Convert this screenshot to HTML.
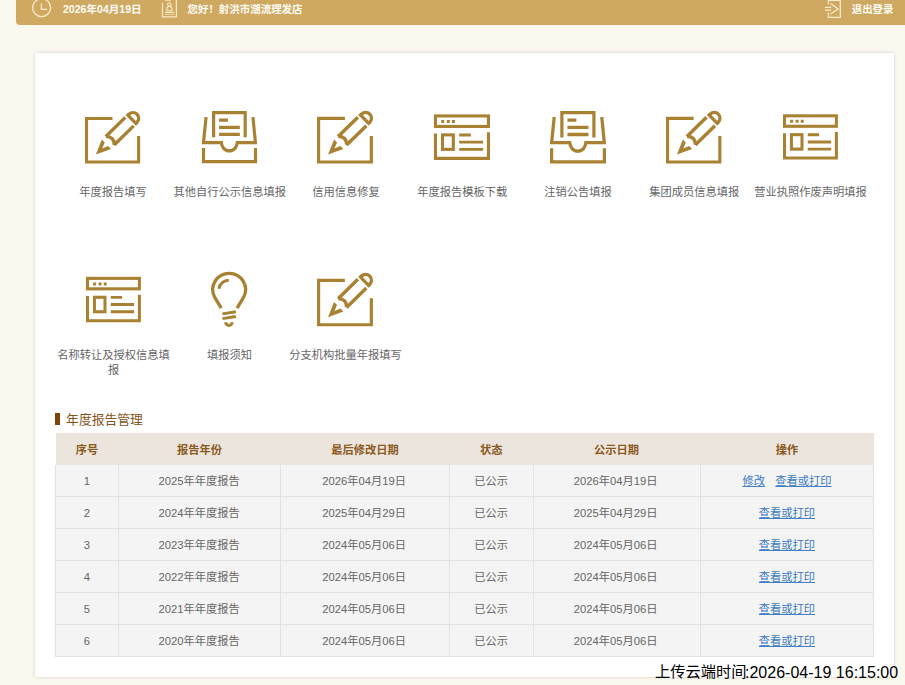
<!DOCTYPE html>
<html lang="zh-CN"><head><meta charset="utf-8"><title>年度报告管理</title>
<style>
*{margin:0;padding:0;box-sizing:border-box}
html,body{width:905px;height:685px;overflow:hidden;background:#fbf8f0;font-family:"Liberation Sans","Noto Sans CJK SC",sans-serif}
.page{position:relative;width:905px;height:685px;overflow:hidden}
svg{display:block;overflow:visible}
svg.p{position:absolute}
svg text{font-family:"Liberation Sans","Noto Sans CJK SC",sans-serif}
.bar{position:absolute;left:16px;top:0;width:889px;height:24.5px;background:#cfa962;border-bottom-left-radius:4px}
.card{position:absolute;left:35px;top:53px;width:859px;height:623.6px;background:#fff;box-shadow:0 0 3.5px rgba(0,0,0,.17)}
.grid{list-style:none}
.ttl{font-weight:normal}
.ttl i{position:absolute;left:20px;top:360px;width:5px;height:12px;background:#7c4405}
.tb{position:absolute;left:20px;top:380px;border-collapse:separate;border-spacing:0;table-layout:fixed;width:819px}
.tb th{height:31.5px;background:#ece5dd}
.tb th:first-child{border-left:1px solid #fff}
.tb td{height:32px;background:#f4f4f4;border-bottom:1px solid #e1e1e1;border-left:1px solid #e1e1e1}
.tb td:last-child{border-right:1px solid #e1e1e1}
.lk{cursor:pointer}
.wm{position:absolute;left:0;top:0}
</style></head>
<body><div class="page">
<header class="bar"><span class="hi"><svg class="p" aria-hidden="true" style="left:14px;top:-3px" width="24" height="24" viewBox="0 0 24 24"><g><g fill="none" stroke="#fbecc8" stroke-width="1.3"><circle cx="11.6" cy="10.7" r="9"/><path d="M11.4 6.8V12.3H17"/></g></g></svg><svg class="p" style="left:47px;top:2px" width="82" height="15" viewBox="0 0 82 15"><g transform="translate(0 0.35)"><g transform="translate(0 10.55)"><text x="0" y="0" font-size="10.55" font-weight="700" fill="#fffdf5">2026年04月19日</text></g></g></svg></span><span class="hi"><svg class="p" aria-hidden="true" style="left:144px;top:0px" width="20" height="20" viewBox="0 0 20 20"><g><g fill="none" stroke="#fbecc8" stroke-width="1.25"><path d="M2.5 3V16.75H16.4V0"/><path d="M5 0.3H11" stroke-width="0.9"/><path d="M4.9 12.4H14.1"/><path d="M4.9 14.4H14.1" stroke-width="0.9" opacity=".75"/><circle cx="9.3" cy="4.5" r="1.7" stroke-width="1.1"/><path d="M6.9 10.7V8.2Q6.9 6.5 9.3 6.5Q11.9 6.5 11.9 8.2V10.7Z" stroke-width="1.1"/></g></g></svg><svg class="p" style="left:171px;top:2px" width="116" height="15" viewBox="0 0 116 15"><g transform="translate(0.5 0.84)"><g transform="translate(0 10.46)"><text x="0" y="0" font-size="10.46" font-weight="700" fill="#fffdf5">您好！射洪市潮流理发店</text></g></g></svg></span><a class="hi"><svg class="p" aria-hidden="true" style="left:806px;top:0px" width="22" height="20" viewBox="0 0 22 20"><g><g fill="none" stroke="#fbecc8" stroke-width="1.25"><path d="M6.4 4.2V0.3H18.3V17.3H6.4V12.6"/><path d="M3 7.4H9.2M3 10.1H9.2" stroke-width="1.1"/><path d="M8.6 3.6L16.1 8.9L8.6 14.1"/></g></g></svg><svg class="p" style="left:835px;top:2px" width="43" height="16" viewBox="0 0 43 16"><g transform="translate(0.7 0.94)"><g transform="translate(0 10.46)"><text x="0" y="0" font-size="10.46" font-weight="700" fill="#fffdf5">退出登录</text></g></g></svg></a></header>
<main class="card">
<ul class="grid"><li><svg class="p" aria-hidden="true" style="left:46px;top:51px" width="72" height="68" viewBox="0 0 72 68"><g transform="translate(4 4.256) scale(0.99549 0.9936)"><g fill="none" stroke="#a88132" stroke-width="3.1"><path d="M27.6 10.3H1.55V54.05H53.85V28"/><g transform="translate(11.2 46.3) rotate(-44.4)" stroke-width="3.4"><path d="M19.4 -6H46.9M19.4 6H46.9M19.6 -6Q25.4 0 19.6 6"/><path d="M50.3 -7.4V7.4" stroke-width="3.2"/><path d="M50.3 -5.7H51.8A5.7 5.7 0 0 1 51.8 5.7H50.3"/><path d="M-0.4 0L14.4 -6.6V-2.4L8.4 0L14.4 2.4V6.6Z" fill="#a88132" stroke="none"/></g></g></g></svg><svg class="p" style="left:44px;top:132px" width="68" height="16" viewBox="0 0 68 16"><g transform="translate(0.15 0.15)"><g transform="translate(0 11.25)"><text x="0" y="0" font-size="11.25" fill="#666666">年度报告填写</text></g></g></svg></li><li><svg class="p" aria-hidden="true" style="left:162px;top:46px" width="72" height="68" viewBox="0 0 72 68"><g transform="translate(-195.349 -98.476) scale(0.99281 0.99618)"><g fill="none" stroke="#a88132" stroke-width="3.2"><path d="M213.5 137.3V112.6H245.3V137.3"/><path d="M219 120H227.9M219 127.3H239.9M219 134.4H239.9" stroke-width="3.3"/><path d="M205.9 117L203.3 142.6H221.3C221.6 147 224.5 151 229.3 151C234.1 151 237 147 237.3 142.6H255.6L253.1 117"/><path d="M203.3 148.1V161.7H255.7V148.1"/></g></g></svg><svg class="p" style="left:138px;top:132px" width="114" height="16" viewBox="0 0 114 16"><g transform="translate(0.55 0.15)"><g transform="translate(0 11.25)"><text x="0" y="0" font-size="11.25" fill="#666666">其他自行公示信息填报</text></g></g></svg></li><li><svg class="p" aria-hidden="true" style="left:278px;top:51px" width="72" height="68" viewBox="0 0 72 68"><g transform="translate(4.05 4.137) scale(1.0081 0.99573)"><g fill="none" stroke="#a88132" stroke-width="3.1"><path d="M27.6 10.3H1.55V54.05H53.85V28"/><g transform="translate(11.2 46.3) rotate(-44.4)" stroke-width="3.4"><path d="M19.4 -6H46.9M19.4 6H46.9M19.6 -6Q25.4 0 19.6 6"/><path d="M50.3 -7.4V7.4" stroke-width="3.2"/><path d="M50.3 -5.7H51.8A5.7 5.7 0 0 1 51.8 5.7H50.3"/><path d="M-0.4 0L14.4 -6.6V-2.4L8.4 0L14.4 2.4V6.6Z" fill="#a88132" stroke="none"/></g></g></g></svg><svg class="p" style="left:277px;top:132px" width="68" height="16" viewBox="0 0 68 16"><g transform="translate(0.15 0.15)"><g transform="translate(0 11.25)"><text x="0" y="0" font-size="11.25" fill="#666666">信用信息修复</text></g></g></svg></li><li><svg class="p" aria-hidden="true" style="left:394px;top:49px" width="72" height="68" viewBox="0 0 72 68"><g transform="translate(-429 -101.874) scale(1 0.9989)"><g fill="none" stroke="#a88132" stroke-width="3.1"><rect x="435.45" y="115.95" width="53" height="10.5"/><path d="M435.45 133.5V158.4H488.45V132.3"/><rect x="442.5" y="134.9" width="10.8" height="14.5"/><path d="M459.2 135H470.8M459.2 142.2H483.1M459.2 149.4H483.1" stroke-width="2.9"/><path d="M441.2 121.5h3M446.8 121.5h3M452 121.5h3" stroke-width="3"/></g></g></svg><svg class="p" style="left:382px;top:132px" width="91" height="16" viewBox="0 0 91 16"><g transform="translate(0.2 0.15)"><g transform="translate(0 11.25)"><text x="0" y="0" font-size="11.25" fill="#666666">年度报告模板下载</text></g></g></svg></li><li><svg class="p" aria-hidden="true" style="left:511px;top:46px" width="72" height="68" viewBox="0 0 72 68"><g transform="translate(-199.151 -99.424) scale(1.0072 1.0038)"><g fill="none" stroke="#a88132" stroke-width="3.2"><path d="M213.5 137.3V112.6H245.3V137.3"/><path d="M219 120H227.9M219 127.3H239.9M219 134.4H239.9" stroke-width="3.3"/><path d="M205.9 117L203.3 142.6H221.3C221.6 147 224.5 151 229.3 151C234.1 151 237 147 237.3 142.6H255.6L253.1 117"/><path d="M203.3 148.1V161.7H255.7V148.1"/></g></g></svg><svg class="p" style="left:509px;top:132px" width="68" height="16" viewBox="0 0 68 16"><g transform="translate(0.15 0.15)"><g transform="translate(0 11.25)"><text x="0" y="0" font-size="11.25" fill="#666666">注销公告填报</text></g></g></svg></li><li><svg class="p" aria-hidden="true" style="left:627px;top:51px" width="72" height="68" viewBox="0 0 72 68"><g transform="translate(4 4.137) scale(1 0.99573)"><g fill="none" stroke="#a88132" stroke-width="3.1"><path d="M27.6 10.3H1.55V54.05H53.85V28"/><g transform="translate(11.2 46.3) rotate(-44.4)" stroke-width="3.4"><path d="M19.4 -6H46.9M19.4 6H46.9M19.6 -6Q25.4 0 19.6 6"/><path d="M50.3 -7.4V7.4" stroke-width="3.2"/><path d="M50.3 -5.7H51.8A5.7 5.7 0 0 1 51.8 5.7H50.3"/><path d="M-0.4 0L14.4 -6.6V-2.4L8.4 0L14.4 2.4V6.6Z" fill="#a88132" stroke="none"/></g></g></g></svg><svg class="p" style="left:614px;top:132px" width="91" height="16" viewBox="0 0 91 16"><g transform="translate(0.2 0.15)"><g transform="translate(0 11.25)"><text x="0" y="0" font-size="11.25" fill="#666666">集团成员信息填报</text></g></g></svg></li><li><svg class="p" aria-hidden="true" style="left:744px;top:49px" width="72" height="68" viewBox="0 0 72 68"><g transform="translate(-420.619 -101.472) scale(0.97861 0.99451)"><g fill="none" stroke="#a88132" stroke-width="3.1"><rect x="435.45" y="115.95" width="53" height="10.5"/><path d="M435.45 133.5V158.4H488.45V132.3"/><rect x="442.5" y="134.9" width="10.8" height="14.5"/><path d="M459.2 135H470.8M459.2 142.2H483.1M459.2 149.4H483.1" stroke-width="2.9"/><path d="M441.2 121.5h3M446.8 121.5h3M452 121.5h3" stroke-width="3"/></g></g></svg><svg class="p" style="left:719px;top:132px" width="113" height="16" viewBox="0 0 113 16"><g transform="translate(0.25 0.15)"><g transform="translate(0 11.25)"><text x="0" y="0" font-size="11.25" fill="#666666">营业执照作废声明填报</text></g></g></svg></li><li><svg class="p" aria-hidden="true" style="left:47px;top:211px" width="72" height="68" viewBox="0 0 72 68"><g transform="translate(-420.619 -101.474) scale(0.97861 0.9989)"><g fill="none" stroke="#a88132" stroke-width="3.1"><rect x="435.45" y="115.95" width="53" height="10.5"/><path d="M435.45 133.5V158.4H488.45V132.3"/><rect x="442.5" y="134.9" width="10.8" height="14.5"/><path d="M459.2 135H470.8M459.2 142.2H483.1M459.2 149.4H483.1" stroke-width="2.9"/><path d="M441.2 121.5h3M446.8 121.5h3M452 121.5h3" stroke-width="3"/></g></g></svg><svg class="p" style="left:22px;top:295px" width="113" height="16" viewBox="0 0 113 16"><g transform="translate(0.25 0.15)"><g transform="translate(0 11.25)"><text x="0" y="0" font-size="11.25" fill="#666666">名称转让及授权信息填</text></g></g></svg><svg class="p" style="left:73px;top:310px" width="12" height="16" viewBox="0 0 12 16"><g transform="translate(0.025 0.15)"><g transform="translate(0 11.25)"><text x="0" y="0" font-size="11.25" fill="#666666">报</text></g></g></svg></li><li><svg class="p" aria-hidden="true" style="left:172px;top:206px" width="72" height="68" viewBox="0 0 72 68"><g transform="translate(-206.95 -254.305) scale(1 0.98534)"><g fill="none" stroke="#a88132" stroke-width="3.3"><path d="M221.2 307.9L215.6 298.6Q214.9 297.5 214.5 296.6A16.4 16.4 0 1 1 243.7 296.6Q243.3 297.5 242.6 298.6L237 307.9"/><path d="M218.9 288.2A10 10 0 0 1 228.7 279.7" stroke-width="3.1"/><path d="M222.4 313.8L235.8 311.6M222.4 318.6L235.8 316.4" stroke-width="3"/><path d="M224.1 322.4A4.8 4.6 0 0 0 233.7 322.4H230.6A1.7 1.7 0 0 1 227.2 322.4Z" fill="#a88132" stroke="none"/></g></g></svg><svg class="p" style="left:172px;top:295px" width="46" height="16" viewBox="0 0 46 16"><g transform="translate(0.1 0.15)"><g transform="translate(0 11.25)"><text x="0" y="0" font-size="11.25" fill="#666666">填报须知</text></g></g></svg></li><li><svg class="p" aria-hidden="true" style="left:278px;top:213px" width="72" height="68" viewBox="0 0 72 68"><g transform="translate(4.05 3.988) scale(1.0081 1.0128)"><g fill="none" stroke="#a88132" stroke-width="3.1"><path d="M27.6 10.3H1.55V54.05H53.85V28"/><g transform="translate(11.2 46.3) rotate(-44.4)" stroke-width="3.4"><path d="M19.4 -6H46.9M19.4 6H46.9M19.6 -6Q25.4 0 19.6 6"/><path d="M50.3 -7.4V7.4" stroke-width="3.2"/><path d="M50.3 -5.7H51.8A5.7 5.7 0 0 1 51.8 5.7H50.3"/><path d="M-0.4 0L14.4 -6.6V-2.4L8.4 0L14.4 2.4V6.6Z" fill="#a88132" stroke="none"/></g></g></g></svg><svg class="p" style="left:254px;top:295px" width="113" height="16" viewBox="0 0 113 16"><g transform="translate(0.25 0.15)"><g transform="translate(0 11.25)"><text x="0" y="0" font-size="11.25" fill="#666666">分支机构批量年报填写</text></g></g></svg></li></ul>
<h2 class="ttl"><i></i><svg class="p" style="left:31px;top:358px" width="77" height="18" viewBox="0 0 77 18"><g transform="translate(0.1 0)"><g transform="translate(0 12.8)"><text x="0" y="0" font-size="12.8" fill="#87531a">年度报告管理</text></g></g></svg></h2>
<table class="tb"><colgroup><col style="width:63px"><col style="width:162px"><col style="width:169px"><col style="width:84px"><col style="width:167px"><col style="width:174px"></colgroup><thead><tr><th><svg class="p" style="left:20px;top:9px" width="24" height="16" viewBox="0 0 24 16"><g transform="translate(0.65 0.35)"><g transform="translate(0 11.25)"><text x="0" y="0" font-size="11.25" font-weight="700" fill="#8b5a1e">序号</text></g></g></svg></th><th><svg class="p" style="left:122px;top:9px" width="46" height="16" viewBox="0 0 46 16"><g transform="translate(0.1 0.35)"><g transform="translate(0 11.25)"><text x="0" y="0" font-size="11.25" font-weight="700" fill="#8b5a1e">报告年份</text></g></g></svg></th><th><svg class="p" style="left:276px;top:9px" width="68" height="16" viewBox="0 0 68 16"><g transform="translate(0.35 0.35)"><g transform="translate(0 11.25)"><text x="0" y="0" font-size="11.25" font-weight="700" fill="#8b5a1e">最后修改日期</text></g></g></svg></th><th><svg class="p" style="left:424px;top:9px" width="24" height="16" viewBox="0 0 24 16"><g transform="translate(0.95 0.35)"><g transform="translate(0 11.25)"><text x="0" y="0" font-size="11.25" font-weight="700" fill="#8b5a1e">状态</text></g></g></svg></th><th><svg class="p" style="left:539px;top:9px" width="46" height="16" viewBox="0 0 46 16"><g transform="translate(0.1 0.35)"><g transform="translate(0 11.25)"><text x="0" y="0" font-size="11.25" font-weight="700" fill="#8b5a1e">公示日期</text></g></g></svg></th><th><svg class="p" style="left:720px;top:9px" width="24" height="16" viewBox="0 0 24 16"><g transform="translate(0.7 0.35)"><g transform="translate(0 11.25)"><text x="0" y="0" font-size="11.25" font-weight="700" fill="#8b5a1e">操作</text></g></g></svg></th></tr></thead><tbody><tr><td><svg class="p" style="left:28px;top:40px" width="8" height="17" viewBox="0 0 8 17"><g transform="translate(0.647 0.85)"><g transform="translate(0 11.25)"><text x="0" y="0" font-size="11.25" fill="#666666">1</text></g></g></svg></td><td><svg class="p" style="left:103px;top:40px" width="83" height="17" viewBox="0 0 83 17"><g transform="translate(0.463 0.85)"><g transform="translate(0 11.25)"><text x="0" y="0" font-size="11.25" fill="#666666">2025年年度报告</text></g></g></svg></td><td><svg class="p" style="left:267px;top:40px" width="86" height="17" viewBox="0 0 86 17"><g transform="translate(0.201 0.85)"><g transform="translate(0 11.25)"><text x="0" y="0" font-size="11.25" fill="#666666">2026年04月19日</text></g></g></svg></td><td><svg class="p" style="left:419px;top:40px" width="35" height="17" viewBox="0 0 35 17"><g transform="translate(0.325 0.85)"><g transform="translate(0 11.25)"><text x="0" y="0" font-size="11.25" fill="#666666">已公示</text></g></g></svg></td><td><svg class="p" style="left:518px;top:40px" width="87" height="17" viewBox="0 0 87 17"><g transform="translate(0.701 0.85)"><g transform="translate(0 11.25)"><text x="0" y="0" font-size="11.25" fill="#666666">2026年04月19日</text></g></g></svg></td><td><a class="lk"><svg class="p" style="left:687px;top:40px" width="23" height="17" viewBox="0 0 23 17"><g transform="translate(0.375 0.85)"><g transform="translate(0 11.25)"><text x="0" y="0" font-size="11.25" fill="#3a7abf">修改</text><rect x="0" y="0.85" width="22.5" height="1" fill="#3a7abf"/></g></g></svg></a><a class="lk"><svg class="p" style="left:720px;top:40px" width="57" height="17" viewBox="0 0 57 17"><g transform="translate(0.275 0.85)"><g transform="translate(0 11.25)"><text x="0" y="0" font-size="11.25" fill="#3a7abf">查看或打印</text><rect x="0" y="0.85" width="56.25" height="1" fill="#3a7abf"/></g></g></svg></a></td></tr><tr><td><svg class="p" style="left:28px;top:72px" width="8" height="17" viewBox="0 0 8 17"><g transform="translate(0.647 0.85)"><g transform="translate(0 11.25)"><text x="0" y="0" font-size="11.25" fill="#666666">2</text></g></g></svg></td><td><svg class="p" style="left:103px;top:72px" width="83" height="17" viewBox="0 0 83 17"><g transform="translate(0.463 0.85)"><g transform="translate(0 11.25)"><text x="0" y="0" font-size="11.25" fill="#666666">2024年年度报告</text></g></g></svg></td><td><svg class="p" style="left:267px;top:72px" width="86" height="17" viewBox="0 0 86 17"><g transform="translate(0.201 0.85)"><g transform="translate(0 11.25)"><text x="0" y="0" font-size="11.25" fill="#666666">2025年04月29日</text></g></g></svg></td><td><svg class="p" style="left:419px;top:72px" width="35" height="17" viewBox="0 0 35 17"><g transform="translate(0.325 0.85)"><g transform="translate(0 11.25)"><text x="0" y="0" font-size="11.25" fill="#666666">已公示</text></g></g></svg></td><td><svg class="p" style="left:518px;top:72px" width="87" height="17" viewBox="0 0 87 17"><g transform="translate(0.701 0.85)"><g transform="translate(0 11.25)"><text x="0" y="0" font-size="11.25" fill="#666666">2025年04月29日</text></g></g></svg></td><td><a class="lk"><svg class="p" style="left:703px;top:72px" width="58" height="17" viewBox="0 0 58 17"><g transform="translate(0.825 0.85)"><g transform="translate(0 11.25)"><text x="0" y="0" font-size="11.25" fill="#3a7abf">查看或打印</text><rect x="0" y="0.85" width="56.25" height="1" fill="#3a7abf"/></g></g></svg></a></td></tr><tr><td><svg class="p" style="left:28px;top:104px" width="8" height="17" viewBox="0 0 8 17"><g transform="translate(0.647 0.85)"><g transform="translate(0 11.25)"><text x="0" y="0" font-size="11.25" fill="#666666">3</text></g></g></svg></td><td><svg class="p" style="left:103px;top:104px" width="83" height="17" viewBox="0 0 83 17"><g transform="translate(0.463 0.85)"><g transform="translate(0 11.25)"><text x="0" y="0" font-size="11.25" fill="#666666">2023年年度报告</text></g></g></svg></td><td><svg class="p" style="left:267px;top:104px" width="86" height="17" viewBox="0 0 86 17"><g transform="translate(0.201 0.85)"><g transform="translate(0 11.25)"><text x="0" y="0" font-size="11.25" fill="#666666">2024年05月06日</text></g></g></svg></td><td><svg class="p" style="left:419px;top:104px" width="35" height="17" viewBox="0 0 35 17"><g transform="translate(0.325 0.85)"><g transform="translate(0 11.25)"><text x="0" y="0" font-size="11.25" fill="#666666">已公示</text></g></g></svg></td><td><svg class="p" style="left:518px;top:104px" width="87" height="17" viewBox="0 0 87 17"><g transform="translate(0.701 0.85)"><g transform="translate(0 11.25)"><text x="0" y="0" font-size="11.25" fill="#666666">2024年05月06日</text></g></g></svg></td><td><a class="lk"><svg class="p" style="left:703px;top:104px" width="58" height="17" viewBox="0 0 58 17"><g transform="translate(0.825 0.85)"><g transform="translate(0 11.25)"><text x="0" y="0" font-size="11.25" fill="#3a7abf">查看或打印</text><rect x="0" y="0.85" width="56.25" height="1" fill="#3a7abf"/></g></g></svg></a></td></tr><tr><td><svg class="p" style="left:28px;top:136px" width="8" height="17" viewBox="0 0 8 17"><g transform="translate(0.647 0.85)"><g transform="translate(0 11.25)"><text x="0" y="0" font-size="11.25" fill="#666666">4</text></g></g></svg></td><td><svg class="p" style="left:103px;top:136px" width="83" height="17" viewBox="0 0 83 17"><g transform="translate(0.463 0.85)"><g transform="translate(0 11.25)"><text x="0" y="0" font-size="11.25" fill="#666666">2022年年度报告</text></g></g></svg></td><td><svg class="p" style="left:267px;top:136px" width="86" height="17" viewBox="0 0 86 17"><g transform="translate(0.201 0.85)"><g transform="translate(0 11.25)"><text x="0" y="0" font-size="11.25" fill="#666666">2024年05月06日</text></g></g></svg></td><td><svg class="p" style="left:419px;top:136px" width="35" height="17" viewBox="0 0 35 17"><g transform="translate(0.325 0.85)"><g transform="translate(0 11.25)"><text x="0" y="0" font-size="11.25" fill="#666666">已公示</text></g></g></svg></td><td><svg class="p" style="left:518px;top:136px" width="87" height="17" viewBox="0 0 87 17"><g transform="translate(0.701 0.85)"><g transform="translate(0 11.25)"><text x="0" y="0" font-size="11.25" fill="#666666">2024年05月06日</text></g></g></svg></td><td><a class="lk"><svg class="p" style="left:703px;top:136px" width="58" height="17" viewBox="0 0 58 17"><g transform="translate(0.825 0.85)"><g transform="translate(0 11.25)"><text x="0" y="0" font-size="11.25" fill="#3a7abf">查看或打印</text><rect x="0" y="0.85" width="56.25" height="1" fill="#3a7abf"/></g></g></svg></a></td></tr><tr><td><svg class="p" style="left:28px;top:168px" width="8" height="17" viewBox="0 0 8 17"><g transform="translate(0.647 0.85)"><g transform="translate(0 11.25)"><text x="0" y="0" font-size="11.25" fill="#666666">5</text></g></g></svg></td><td><svg class="p" style="left:103px;top:168px" width="83" height="17" viewBox="0 0 83 17"><g transform="translate(0.463 0.85)"><g transform="translate(0 11.25)"><text x="0" y="0" font-size="11.25" fill="#666666">2021年年度报告</text></g></g></svg></td><td><svg class="p" style="left:267px;top:168px" width="86" height="17" viewBox="0 0 86 17"><g transform="translate(0.201 0.85)"><g transform="translate(0 11.25)"><text x="0" y="0" font-size="11.25" fill="#666666">2024年05月06日</text></g></g></svg></td><td><svg class="p" style="left:419px;top:168px" width="35" height="17" viewBox="0 0 35 17"><g transform="translate(0.325 0.85)"><g transform="translate(0 11.25)"><text x="0" y="0" font-size="11.25" fill="#666666">已公示</text></g></g></svg></td><td><svg class="p" style="left:518px;top:168px" width="87" height="17" viewBox="0 0 87 17"><g transform="translate(0.701 0.85)"><g transform="translate(0 11.25)"><text x="0" y="0" font-size="11.25" fill="#666666">2024年05月06日</text></g></g></svg></td><td><a class="lk"><svg class="p" style="left:703px;top:168px" width="58" height="17" viewBox="0 0 58 17"><g transform="translate(0.825 0.85)"><g transform="translate(0 11.25)"><text x="0" y="0" font-size="11.25" fill="#3a7abf">查看或打印</text><rect x="0" y="0.85" width="56.25" height="1" fill="#3a7abf"/></g></g></svg></a></td></tr><tr><td><svg class="p" style="left:28px;top:200px" width="8" height="17" viewBox="0 0 8 17"><g transform="translate(0.647 0.85)"><g transform="translate(0 11.25)"><text x="0" y="0" font-size="11.25" fill="#666666">6</text></g></g></svg></td><td><svg class="p" style="left:103px;top:200px" width="83" height="17" viewBox="0 0 83 17"><g transform="translate(0.463 0.85)"><g transform="translate(0 11.25)"><text x="0" y="0" font-size="11.25" fill="#666666">2020年年度报告</text></g></g></svg></td><td><svg class="p" style="left:267px;top:200px" width="86" height="17" viewBox="0 0 86 17"><g transform="translate(0.201 0.85)"><g transform="translate(0 11.25)"><text x="0" y="0" font-size="11.25" fill="#666666">2024年05月06日</text></g></g></svg></td><td><svg class="p" style="left:419px;top:200px" width="35" height="17" viewBox="0 0 35 17"><g transform="translate(0.325 0.85)"><g transform="translate(0 11.25)"><text x="0" y="0" font-size="11.25" fill="#666666">已公示</text></g></g></svg></td><td><svg class="p" style="left:518px;top:200px" width="87" height="17" viewBox="0 0 87 17"><g transform="translate(0.701 0.85)"><g transform="translate(0 11.25)"><text x="0" y="0" font-size="11.25" fill="#666666">2024年05月06日</text></g></g></svg></td><td><a class="lk"><svg class="p" style="left:703px;top:200px" width="58" height="17" viewBox="0 0 58 17"><g transform="translate(0.825 0.85)"><g transform="translate(0 11.25)"><text x="0" y="0" font-size="11.25" fill="#3a7abf">查看或打印</text><rect x="0" y="0.85" width="56.25" height="1" fill="#3a7abf"/></g></g></svg></a></td></tr></tbody></table>
</main>
<div class="wm"><svg class="p" style="left:655px;top:662px" width="92" height="21" viewBox="0 0 92 21"><g transform="translate(0 0.05)"><g transform="translate(0 15.25)"><text x="0" y="0" font-size="15.25" fill="#000">上传云端时间</text></g></g></svg><svg class="p" style="left:745px;top:661px" width="154" height="23" viewBox="0 0 154 23"><g transform="translate(0 0.58)"><g transform="translate(0 16.02)"><text x="0" y="0" font-size="16.02" fill="#000" xml:space="preserve">:2026-04-19 16:15:00</text></g></g></svg></div>
</div></body></html>
